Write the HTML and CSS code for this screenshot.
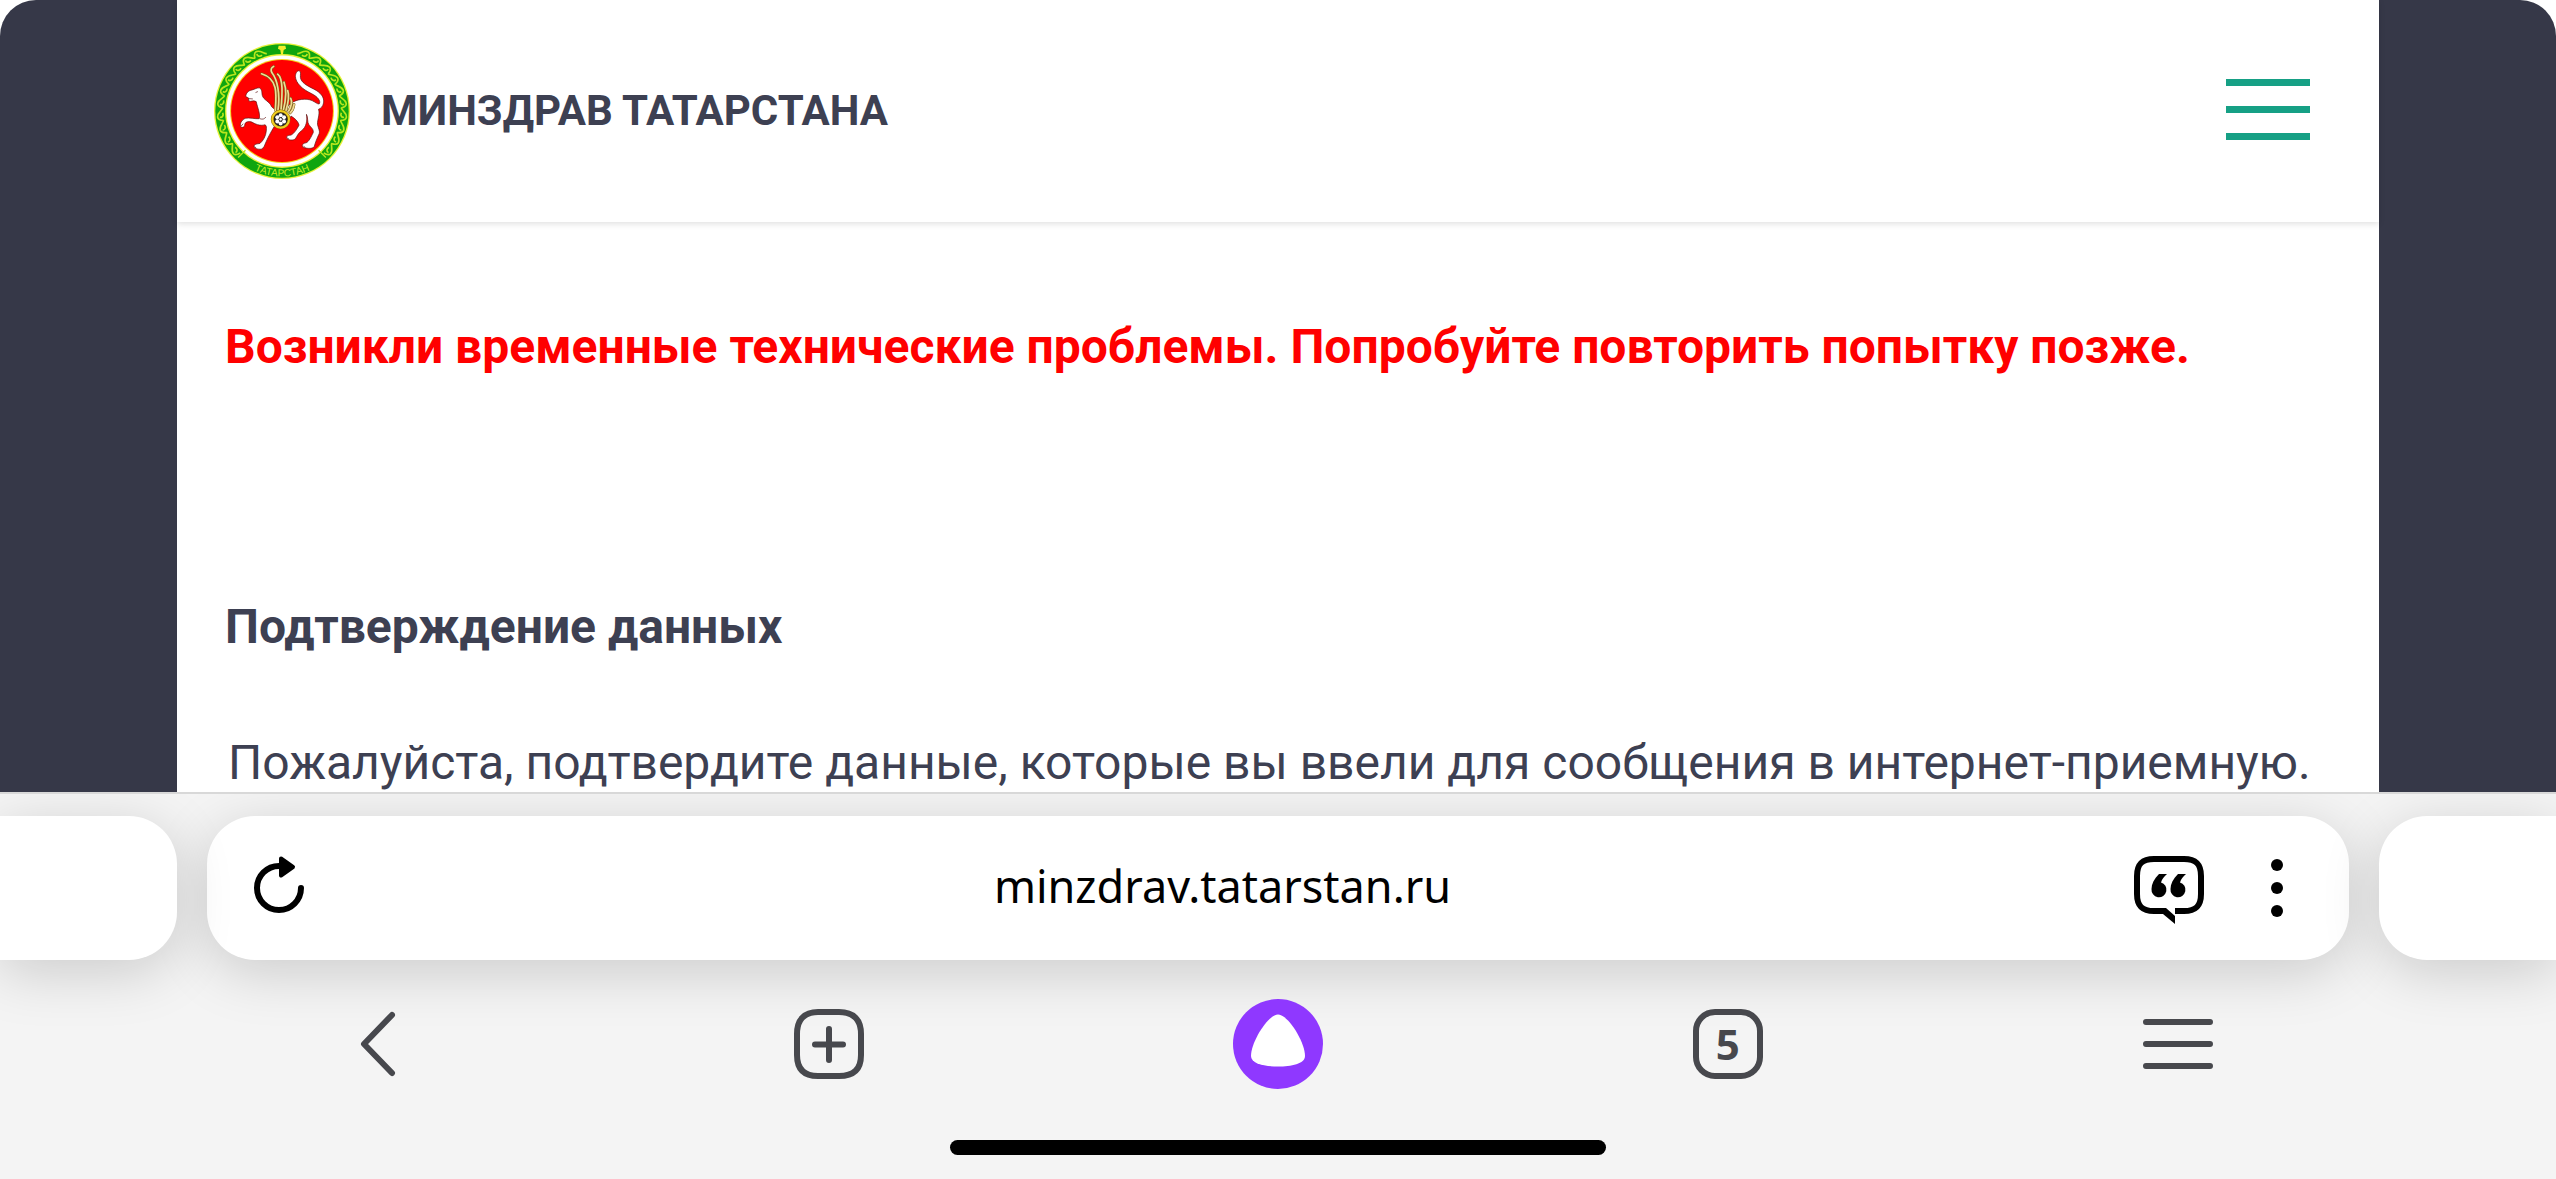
FILE: index.html
```html
<!DOCTYPE html>
<html lang="ru">
<head>
  <meta charset="UTF-8">
  <meta name="viewport" content="width=device-width, initial-scale=1">
  <title>Минздрав Татарстана</title>
  <link rel="stylesheet" href="styles.css">
</head>
<body>
  <div class="viewport">
    <div class="site">
      <header class="header">
        <a class="brand" href="#">
          <svg class="emblem" viewBox="43 39 406 406" aria-hidden="true">
            <defs>
              <path id="leaf" d="M227 66C236 64 240 49 254 49C262 50 264 56 265 66M242 65C250 68 257 63 255 56" fill="none" stroke="#b9e61e" stroke-width="5"/>
              <g id="side">
                <use href="#leaf" transform="rotate(21 246 242)"/>
                <use href="#leaf" transform="rotate(33 246 242)"/>
                <use href="#leaf" transform="rotate(45 246 242)"/>
                <use href="#leaf" transform="rotate(57 246 242)"/>
                <use href="#leaf" transform="rotate(69 246 242)"/>
                <use href="#leaf" transform="rotate(81 246 242)"/>
                <use href="#leaf" transform="rotate(93 246 242)"/>
                <use href="#leaf" transform="rotate(105 246 242)"/>
                <use href="#leaf" transform="rotate(117 246 242)"/>
                <use href="#leaf" transform="rotate(129 246 242)"/>
                <path d="M377 381l-22-22" stroke="#b9e61e" stroke-width="4"/>
              </g>
            </defs>
            <circle cx="246" cy="242" r="203" fill="#e8f23a"/>
            <circle cx="246" cy="242" r="199" fill="#0fa50f"/>
            <circle cx="246" cy="242" r="170" fill="#e8f23a"/>
            <circle cx="246" cy="242" r="166" fill="#fff"/>
            <circle cx="246" cy="242" r="155" fill="#f6d21c"/>
            <circle cx="246" cy="242" r="152" fill="#f00"/>
            <!-- орнамент -->
            <use href="#side"/>
            <use href="#side" transform="translate(492 0) scale(-1 1)"/>
            <path d="M236 47h20l2 9-7 4-2 12h-6l-2-12-7-4z" fill="#f4ee2c"/>
            <path id="arc" d="M121 392A195 195 0 0 0 371 392" fill="none"/>
            <text class="emblem-text"><textPath href="#arc" startOffset="50%">ТАТАРСТАН</textPath></text>
            <!-- барс -->
            <g fill="#fff" stroke="#5a1010" stroke-width="2" stroke-linejoin="round">
              <path d="M274 218C290 207 318 203 336 211C346 216 352 222 357 221C363 212 352 199 334 190C306 177 287 158 286 139C286 130 291 121 297 122C304 124 300 134 301 142C303 157 320 166 340 176C362 187 373 201 370 218C368 229 362 234 355 237C360 252 351 268 352 282C355 296 360 302 357 310C350 324 345 338 342 349C336 356 317 354 309 350C303 344 309 338 318 337C327 333 333 319 339 307C342 297 331 290 326 282C321 275 324 262 319 252C322 270 319 290 304 301C295 307 291 317 286 325C279 331 265 329 260 323C258 317 265 314 273 314C283 309 291 295 297 284C294 272 284 264 273 257C263 280 236 284 223 288C214 303 205 319 199 333C194 343 193 353 184 356C174 357 163 353 162 347C163 341 171 340 180 339C190 331 198 316 199 302C200 290 200 285 195 283C181 288 164 280 156 275C146 272 137 274 135 281C136 288 129 294 123 289C119 281 125 269 136 264C149 261 165 266 178 265C182 252 173 232 169 214C160 208 153 216 147 212L146 203L138 199C138 188 146 181 157 179C165 177 172 172 179 173C188 179 185 187 187 195C190 209 209 213 215 229C224 240 238 240 250 237z"/>
              <path d="M147 205l12 1M174 184l-7 3M180 265c9 3 13 1 18-5M163 348l6 4M310 347l6 4M124 287l6-7M261 322l6 4" fill="none"/>
            </g>
            <!-- крыло -->
            <g fill="none" stroke-linecap="round">
              <g stroke="#7a5a10" stroke-width="8">
                <path d="M226 240C230 190 234 146 185 131M234 240C241 190 232 148 216 128C211 119 214 112 221 109M243 240C247 190 250 145 233 132M250 240C260 200 258 172 252 156M258 240C267 210 266 190 263 181M266 242C276 224 276 212 272 204M270 248C278 240 281 232 282 222"/>
              </g>
              <g stroke="#f0dc96" stroke-width="5">
                <path d="M226 240C230 190 234 146 185 131M234 240C241 190 232 148 216 128C211 119 214 112 221 109M243 240C247 190 250 145 233 132M250 240C260 200 258 172 252 156M258 240C267 210 266 190 263 181M266 242C276 224 276 212 272 204M270 248C278 240 281 232 282 222"/>
              </g>
            </g>
            <circle cx="242" cy="267" r="25" fill="#222" stroke="#8c6a08" stroke-width="9"/>
            <circle cx="242" cy="267" r="25" fill="none" stroke="#f0cf20" stroke-width="6"/>
            <g fill="#fff">
              <circle cx="242" cy="255" r="6"/><circle cx="252" cy="261" r="6"/><circle cx="252" cy="273" r="6"/>
              <circle cx="242" cy="279" r="6"/><circle cx="232" cy="273" r="6"/><circle cx="232" cy="261" r="6"/>
              <circle cx="242" cy="267" r="5" stroke="#222" stroke-width="2"/>
            </g>
          </svg>
          <span>МИНЗДРАВ ТАТАРСТАНА</span>
        </a>
        <button class="burger" type="button" aria-label="Меню">
          <i></i><i></i><i></i>
        </button>
      </header>
      <main class="content">
        <p class="error">Возникли временные технические проблемы. Попробуйте повторить попытку позже.</p>
        <h1>Подтверждение данных</h1>
        <p class="lead">Пожалуйста, подтвердите данные, которые вы ввели для сообщения в интернет-приемную.</p>
      </main>
    </div>
  </div>

  <div class="toolbar">
    <div class="tabs">
      <div class="peek peek-left"></div>
      <form class="address">
        <button class="reload" type="button" aria-label="Обновить">
          <svg width="64" height="80" viewBox="0 0 64 80">
            <path d="M54 40A22 22 0 1 1 32 18" fill="none" stroke="#000" stroke-width="6" stroke-linecap="round"/>
            <path d="M34 10.500L46 19L34 27.500z" stroke="#000" stroke-width="4" stroke-linejoin="round"/>
          </svg>
        </button>
        <input type="text" aria-label="Адрес" value="minzdrav.tatarstan.ru">
        <button class="quote" type="button" aria-label="Комментарии">
          <svg width="70" height="80" viewBox="0 0 70 80">
            <path d="M41 63H50C62 63 67 58 67 46V28C67 16 62 11 50 11H20C8 11 3 16 3 28V46C3 58 8 63 20 63H30" fill="none" stroke="#000" stroke-width="6"/>
            <path d="M29 60H32L41 68V76L29 66z"/>
            <path id="mark" d="M33 26H25C20 31 17.500 36 17.500 41A7.500 7.500 0 1 0 27 34.500C28 31 30 29 33 26z"/>
            <use href="#mark" x="19"/>
          </svg>
        </button>
        <button class="more" type="button" aria-label="Ещё">
          <svg width="50" height="80" viewBox="0 0 50 80">
            <circle cx="25" cy="17" r="6"/><circle cx="25" cy="40" r="6"/><circle cx="25" cy="63" r="6"/>
          </svg>
        </button>
      </form>
      <div class="peek peek-right"></div>
    </div>

    <nav class="nav">
      <button type="button" aria-label="Назад">
        <svg width="90" height="90" viewBox="0 0 90 90">
          <path d="M59 16L31 45L59 74" class="line"/>
        </svg>
      </button>
      <button type="button" aria-label="Новая вкладка">
        <svg width="90" height="90" viewBox="0 0 90 90">
          <path d="M35 13H56C71 13 78 21 78 35V56C78 70 71 77 56 77H35C21 77 14 70 14 56V35C14 21 21 13 35 13z" class="line"/>
          <path d="M46 30V61M32 45.500H60" class="line"/>
        </svg>
      </button>
      <button type="button" aria-label="Алиса">
        <svg width="90" height="90" viewBox="0 0 90 90">
          <circle cx="45" cy="45" r="45" fill="#8f38ff"/>
          <path d="M45 15.500C55 15.500 72 43 72 57C72 65 58 67.500 45 67.500S18 65 18 57C18 43 35 15.500 45 15.500z" fill="#fff"/>
        </svg>
      </button>
      <button class="count" type="button" aria-label="Вкладки: 5">
        <span>5</span>
      </button>
      <button type="button" aria-label="Меню браузера">
        <svg width="90" height="90" viewBox="0 0 90 90">
          <path d="M13 23H77M13 45H77M13 67H77" class="line"/>
        </svg>
      </button>
    </nav>
    <div class="home"></div>
  </div>
</body>
</html>
```
FILE: styles.css
```css
/*common*/
* {
  box-sizing: border-box;
  margin: 0;
  padding: 0;
}
body {
  display: flex;
  flex-direction: column;
  height: 100vh;
  overflow: hidden;
  background: #fff;
  color: #3d4052;
  font-family: Roboto, sans-serif;
  font-size: 48px;
  line-height: 56px;
}
button {
  border: none;
  background: none;
  cursor: pointer;
}
svg {
  display: block;
}

/*page*/
.viewport {
  flex: 1;
  min-height: 0;
  overflow: hidden;
  padding: 0 177px;
  background: #363848;
  border-radius: 36px 36px 0 0;
}
.site {
  height: 100%;
  background: #fff;
}
.header {
  display: flex;
  align-items: center;
  justify-content: space-between;
  height: 222px;
  padding: 0 69px 0 37px;
  box-shadow: 0 2px 6px rgba(0, 0, 0, .12);
}
.brand {
  display: flex;
  align-items: center;
  gap: 31px;
  color: inherit;
  font-size: 42px;
  font-weight: 700;
  text-decoration: none;
}
.emblem {
  width: 136px;
  height: 136px;
}
.emblem-text {
  font: 400 30px "Liberation Sans", sans-serif;
  fill: #c8ec28;
  text-anchor: middle;
}
.burger {
  display: flex;
  flex-direction: column;
  gap: 20px;
  padding-bottom: 4px;
}
.burger i {
  width: 84px;
  height: 7px;
  background: #16a085;
}
.content {
  padding: 97px 48px 0;
}
.error {
  margin-bottom: 224px;
  color: #f00;
  font-weight: 700;
}
h1 {
  margin-bottom: 80px;
  font-size: 48px;
  font-weight: 700;
}
.lead {
  padding-left: 3px;
  white-space: nowrap;
}

/*browser toolbar*/
.toolbar {
  padding: 22px 0 24px;
  border-top: 2px solid #d8d8d8;
  background: #f4f4f4;
  overflow: hidden;
}
.tabs {
  display: flex;
  gap: 30px;
  height: 144px;
}
.peek, .address {
  background: #fff;
  box-shadow: 0 12px 56px rgba(0, 0, 0, .17);
}
.peek {
  flex: 0 0 177px;
}
.peek-left {
  position: relative;
  border-radius: 0 48px 48px 0;
}
.peek-right {
  position: relative;
  border-radius: 48px 0 0 48px;
}
.address {
  display: flex;
  flex: 1;
  align-items: center;
  padding: 0 47px 0 40px;
  border-radius: 48px;
}
.address input {
  flex: 1;
  min-width: 0;
  padding-bottom: 4px;
  border: none;
  outline: none;
  background: none;
  color: #000;
  font: 45px/60px "Noto Sans", sans-serif;
  text-align: center;
}
.quote {
  margin-right: 48px;
}
.nav {
  position: relative;
  display: flex;
  height: 104px;
  margin-top: 32px;
  padding: 0 6%;
}
.nav button {
  display: flex;
  flex: 1;
  align-items: center;
  justify-content: center;
}
.line {
  fill: none;
  stroke: #47484d;
  stroke-width: 6;
  stroke-linecap: round;
  stroke-linejoin: round;
}
.count span {
  width: 70px;
  height: 70px;
  border: 6px solid #47484d;
  border-radius: 22px;
  color: #47484d;
  font: 700 42px/58px "Noto Sans", sans-serif;
}
.home {
  width: 656px;
  height: 15px;
  margin: 44px auto 0;
  border-radius: 8px;
  background: #000;
}
```
